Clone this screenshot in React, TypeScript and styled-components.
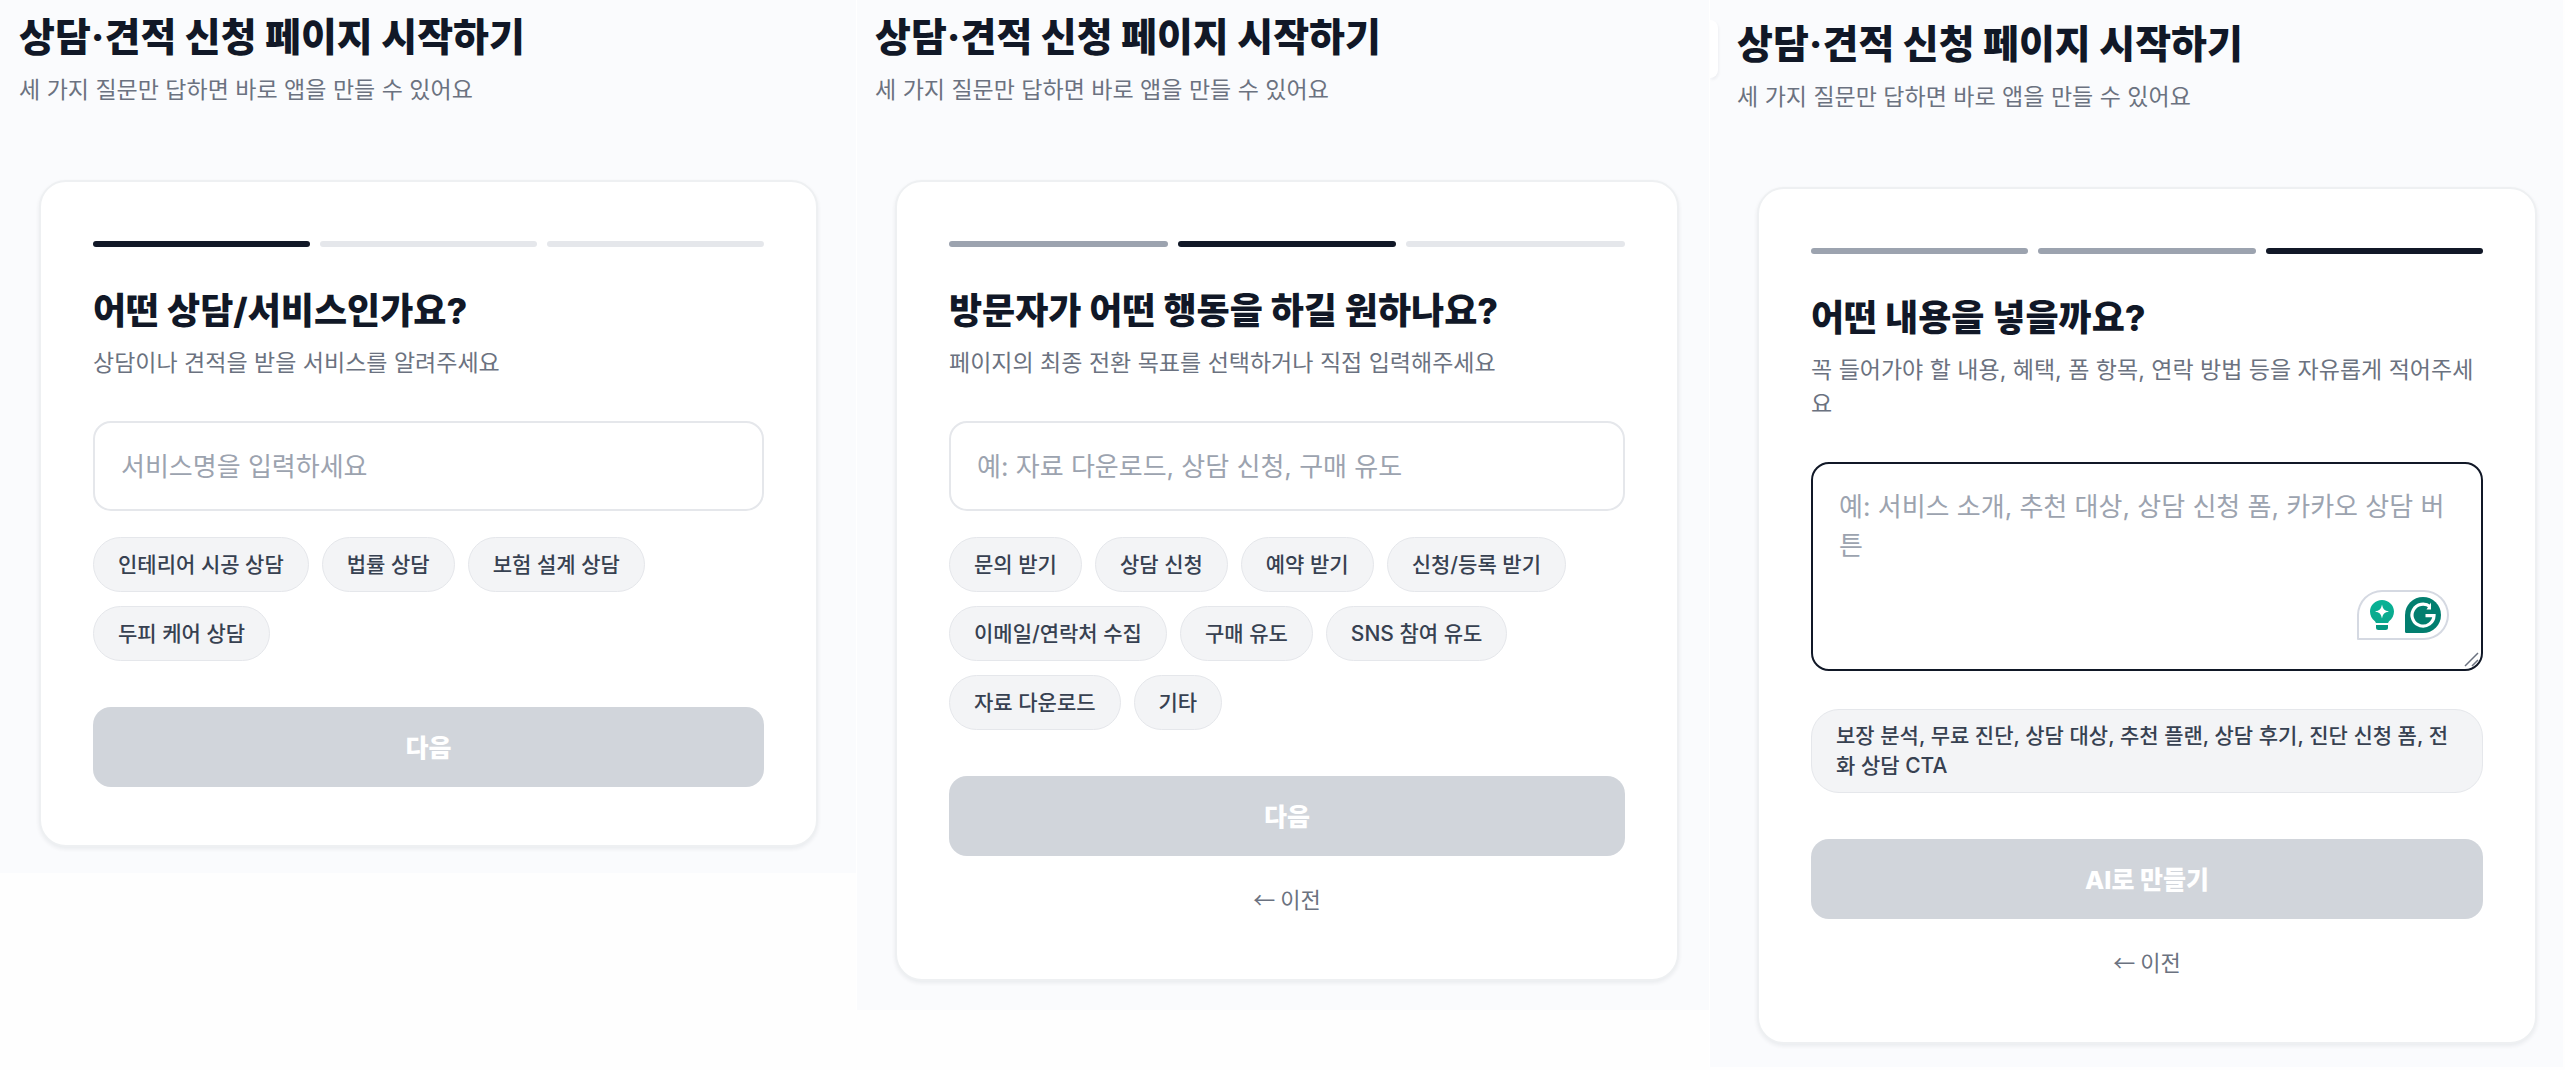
import React from "react";
import styled, { createGlobalStyle } from "styled-components";

const color = {
  page: "#fefefe",
  panel: "#fafbfd",
  ink: "#111827",
  muted: "#6b7280",
  placeholder: "#9ca3af",
  line: "#e5e7eb",
  chip: "#f3f4f6",
  chipText: "#374151",
  disabled: "#d1d5db",
  green: "#027e6f",
};

const GlobalStyle = createGlobalStyle`
  * { box-sizing: border-box; }
  body {
    margin: 0;
    background: ${color.page};
    color: ${color.ink};
    font-family: Inter, "Noto Sans CJK KR", sans-serif;
  }
  button, input, textarea { font-family: inherit; }
`;

const Board = styled.main`
  display: grid;
  grid-template-columns: 856fr 853fr 854fr;
  align-items: start;
  padding-right: 2px;
`;

const Panel = styled.section<{ $top: number; $left: number; $right: number; $bottom: number }>`
  position: relative;
  background: ${color.panel};
  padding: ${(p) => `${p.$top}px ${p.$right}px ${p.$bottom}px ${p.$left}px`};

  & + & {
    border-left: 1px solid #fff;
  }
`;

const DrawerEdge = styled.span`
  position: absolute;
  left: 0;
  top: 20px;
  width: 8px;
  height: 58px;
  background: #fff;
  border-radius: 0 12px 12px 0;
  box-shadow: 1px 2px 3px rgba(17, 24, 39, 0.05);
`;

const Title = styled.h1`
  margin: 0;
  font-size: 39px;
  line-height: 48px;
  font-weight: 800;
`;

const Description = styled.p`
  margin: 12px 0 0;
  color: ${color.muted};
  font-size: 23px;
  line-height: 34px;
`;

const Card = styled.form`
  margin: 73px 0 0 20px;
  padding: 59px 52px 58px;
  background: #fff;
  border: 2px solid #eef0f2;
  border-radius: 27px;
  box-shadow: 0 2px 4px rgba(17, 24, 39, 0.07);
`;

const Steps = styled.div`
  display: grid;
  grid-template-columns: repeat(3, 1fr);
  gap: 10px;
`;

const Step = styled.span<{ $state: "done" | "active" | "todo" }>`
  height: 6px;
  border-radius: 3px;
  background: ${(p) =>
    p.$state === "active" ? color.ink : p.$state === "done" ? color.placeholder : color.line};
`;

const Question = styled.h2`
  margin: 41px 0 0;
  font-size: 36px;
  line-height: 46px;
  font-weight: 800;
`;

const TextInput = styled.input`
  display: block;
  width: 100%;
  height: 90px;
  margin-top: 41px;
  padding: 0 26px;
  background: #fff;
  border: 2px solid ${color.line};
  border-radius: 18px;
  color: ${color.ink};
  font-size: 26px;
  outline: none;

  &::placeholder {
    color: ${color.placeholder};
    opacity: 1;
  }
`;

const AreaWrap = styled.div`
  position: relative;
  margin: 41px 0 38px;
`;

const TextArea = styled.textarea`
  display: block;
  width: 100%;
  height: 209px;
  padding: 23px 26px;
  background: #fff;
  border: 2px solid ${color.ink};
  border-radius: 18px;
  color: ${color.ink};
  font-size: 26px;
  line-height: 39px;
  resize: none;
  outline: none;

  &::placeholder {
    color: ${color.placeholder};
    opacity: 1;
  }
`;

const Assistant = styled.div`
  position: absolute;
  right: 34px;
  bottom: 31px;
  display: flex;
  align-items: center;
  gap: 10px;
  height: 50px;
  padding: 0 6px 0 10px;
  background: #fff;
  border: 2px solid #d5d9e2;
  border-radius: 25px 25px 25px 1px;
`;

const Grip = styled.svg`
  position: absolute;
  right: 3px;
  bottom: 3px;
  pointer-events: none;
`;

const Chips = styled.div`
  display: flex;
  flex-wrap: wrap;
  gap: 14px 13px;
`;

const InputChips = styled(Chips)`
  margin-top: 26px;
`;

const Chip = styled.button`
  min-height: 55px;
  padding: 11px 24px;
  background: ${color.chip};
  border: 1px solid ${color.line};
  border-radius: 28px;
  color: ${color.chipText};
  font-size: 21px;
  font-weight: 500;
  line-height: 30px;
  text-align: left;
  cursor: pointer;
`;

const Submit = styled.button`
  display: block;
  width: 100%;
  height: 80px;
  margin-top: 46px;
  padding: 0 0 3px;
  background: ${color.disabled};
  border: 0;
  border-radius: 18px;
  color: #fff;
  font-size: 25px;
  font-weight: 800;
`;

const Back = styled.button`
  display: block;
  height: 47px;
  margin: 18px auto 0;
  padding: 0 12px;
  background: none;
  border: 0;
  color: ${color.muted};
  font-family: "Noto Sans CJK KR", sans-serif;
  font-size: 22px;
  cursor: pointer;
`;

const BulbIcon = () => (
  <svg width="26" height="34" viewBox="0 0 26 34" aria-hidden="true">
    <defs>
      <linearGradient id="bulb" x1="0" y1="0" x2="0" y2="1">
        <stop offset="0" stopColor="#08b396" />
        <stop offset="1" stopColor="#0aa78c" />
      </linearGradient>
    </defs>
    <path
      fill="url(#bulb)"
      d="M13 2C6.400 2 1 7.200 1 13.600c0 4 2 7.300 4.700 9.500.7.600 1.100 1.100 1.100 1.900h12.400c0-.8.4-1.300 1.100-1.900 2.700-2.200 4.700-5.500 4.700-9.500C25 7.200 19.600 2 13 2Z"
    />
    <path fill="#059680" d="M7 27h12v2.500a2.500 2.500 0 0 1-2.500 2.500h-7A2.500 2.500 0 0 1 7 29.500Z" />
    <path fill="#fff" d="M13 6.500c1 4.700 2.300 6 7 7-4.700 1-6 2.300-7 7-1-4.700-2.300-6-7-7 4.700-1 6-2.300 7-7Z" />
  </svg>
);

const CheckerIcon = () => (
  <svg width="36" height="36" viewBox="0 0 36 36" aria-hidden="true">
    <path fill={color.green} d="M18 0a18 18 0 1 1 0 36H1.500A1.500 1.500 0 0 1 0 34.500V18A18 18 0 0 1 18 0Z" />
    <path
      fill="none"
      stroke="#fff"
      strokeWidth="3.2"
      strokeLinejoin="miter"
      d="M25.200 9.800A11 11 0 1 0 29 18.600H20.500"
    />
    <path fill="#fff" d="M26 5.500v7h-4.500Z" />
  </svg>
);

type StepPanel = {
  id: string;
  frame: [number, number, number, number];
  active: number;
  question: string;
  hint: string;
  placeholder: string;
  multiline?: boolean;
  chips: string[];
  submit: string;
};

const panels: StepPanel[] = [
  {
    id: "service",
    frame: [13, 19, 38, 26],
    active: 0,
    question: "어떤 상담/서비스인가요?",
    hint: "상담이나 견적을 받을 서비스를 알려주세요",
    placeholder: "서비스명을 입력하세요",
    chips: ["인테리어 시공 상담", "법률 상담", "보험 설계 상담", "두피 케어 상담"],
    submit: "다음",
  },
  {
    id: "goal",
    frame: [13, 18, 30, 29],
    active: 1,
    question: "방문자가 어떤 행동을 하길 원하나요?",
    hint: "페이지의 최종 전환 목표를 선택하거나 직접 입력해주세요",
    placeholder: "예: 자료 다운로드, 상담 신청, 구매 유도",
    chips: [
      "문의 받기",
      "상담 신청",
      "예약 받기",
      "신청/등록 받기",
      "이메일/연락처 수집",
      "구매 유도",
      "SNS 참여 유도",
      "자료 다운로드",
      "기타",
    ],
    submit: "다음",
  },
  {
    id: "content",
    frame: [20, 27, 26, 23],
    active: 2,
    question: "어떤 내용을 넣을까요?",
    hint: "꼭 들어가야 할 내용, 혜택, 폼 항목, 연락 방법 등을 자유롭게 적어주세요",
    placeholder: "예: 서비스 소개, 추천 대상, 상담 신청 폼, 카카오 상담 버튼",
    multiline: true,
    chips: ["보장 분석, 무료 진단, 상담 대상, 추천 플랜, 상담 후기, 진단 신청 폼, 전화 상담 CTA"],
    submit: "AI로 만들기",
  },
];

const StepView = ({ panel }: { panel: StepPanel }) => {
  const [value, setValue] = React.useState("");
  const [top, left, right, bottom] = panel.frame;
  const ChipRow = panel.multiline ? Chips : InputChips;

  return (
    <Panel $top={top} $left={left} $right={right} $bottom={bottom}>
      {panel.multiline && <DrawerEdge />}
      <Title>상담·견적 신청 페이지 시작하기</Title>
      <Description>세 가지 질문만 답하면 바로 앱을 만들 수 있어요</Description>
      <Card onSubmit={(e) => e.preventDefault()}>
        <Steps>
          {[0, 1, 2].map((i) => (
            <Step key={i} $state={i === panel.active ? "active" : i < panel.active ? "done" : "todo"} />
          ))}
        </Steps>
        <Question>
          <label htmlFor={panel.id}>{panel.question}</label>
        </Question>
        <Description>{panel.hint}</Description>
        {panel.multiline ? (
          <AreaWrap>
            <TextArea
              id={panel.id}
              placeholder={panel.placeholder}
              value={value}
              onChange={(e) => setValue(e.target.value)}
            />
            <Assistant>
              <BulbIcon />
              <CheckerIcon />
            </Assistant>
            <Grip width="16" height="16" viewBox="0 0 16 16" aria-hidden="true">
              <path d="M1 14 14 1M8 14l6-6" stroke="#6b7280" strokeWidth="1.5" fill="none" />
            </Grip>
          </AreaWrap>
        ) : (
          <TextInput
            id={panel.id}
            type="text"
            placeholder={panel.placeholder}
            value={value}
            onChange={(e) => setValue(e.target.value)}
          />
        )}
        <ChipRow>
          {panel.chips.map((chip) => (
            <Chip key={chip} type="button" onClick={() => setValue(chip)}>
              {chip}
            </Chip>
          ))}
        </ChipRow>
        <Submit type="submit" disabled={!value}>
          {panel.submit}
        </Submit>
        {panel.active > 0 && <Back type="button">← 이전</Back>}
      </Card>
    </Panel>
  );
};

export default function App() {
  return (
    <>
      <GlobalStyle />
      <Board>
        {panels.map((panel) => (
          <StepView key={panel.id} panel={panel} />
        ))}
      </Board>
    </>
  );
}
